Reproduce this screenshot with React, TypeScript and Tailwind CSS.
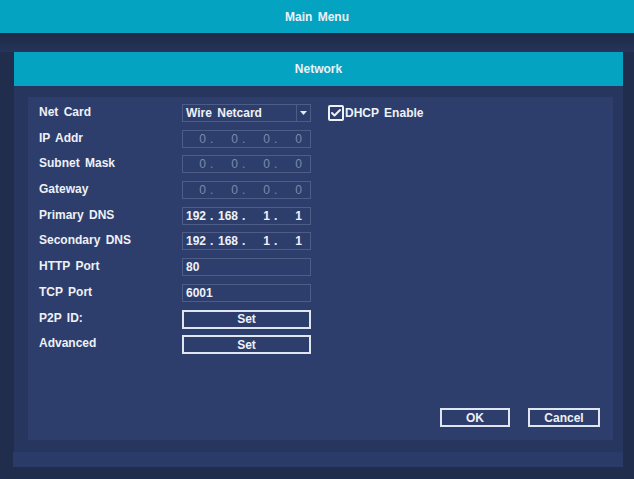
import { Check } from 'lucide-react';

const rows = [
    { label: 'IP Addr', kind: 'ip', value: ['0', '0', '0', '0'], dim: true },
    { label: 'Subnet Mask', kind: 'ip', value: ['0', '0', '0', '0'], dim: true },
    { label: 'Gateway', kind: 'ip', value: ['0', '0', '0', '0'], dim: true },
    { label: 'Primary DNS', kind: 'ip', value: ['192', '168', '1', '1'], dim: false },
    { label: 'Secondary DNS', kind: 'ip', value: ['192', '168', '1', '1'], dim: false },
    { label: 'HTTP Port', kind: 'text', value: ['80'], dim: false },
    { label: 'TCP Port', kind: 'text', value: ['6001'], dim: false },
    { label: 'P2P ID:', kind: 'button', value: ['Set'], dim: false },
    { label: 'Advanced', kind: 'button', value: ['Set'], dim: false },
];

function IpField({ parts, dim }: { parts: string[]; dim: boolean }) {
    return (
        <div className={`flex h-[18px] w-[129px] items-center border border-[#4d5d86] ${dim ? 'font-normal text-[#7f8aa8]' : 'text-[#eef1f7]'}`}>
            {parts.map((p, i) => (
                <div key={i} className="flex">
                    <span className="w-[23px] text-right">{p}</span>
                    {i < 3 && <span className="w-[9px] pl-[4px]">.</span>}
                </div>
            ))}
        </div>
    );
}

export default function App() {
    return (
        <div className="flex h-[479px] w-[634px] flex-col overflow-hidden bg-[#202d4d] font-['Liberation_Sans',Arial,sans-serif] text-[12px] font-bold text-[#eef1f7] [word-spacing:2px]">
            {/* Top bar */}
            <div className="flex h-[33px] shrink-0 items-center justify-center bg-[#03a3c1] pt-[1px]">
                Main Menu
            </div>

            <div className="h-[19px] shrink-0 bg-gradient-to-b from-[#1e2a46] to-[#253459]" />

            {/* Window */}
            <div className="mx-[14px] mr-[11px] flex h-[400px] flex-col bg-[#26365e]">
                <div className="flex h-[34px] shrink-0 items-center justify-center bg-[#03a3c1]">
                    Network
                </div>

                <div className="ml-[14px] mr-[10px] mt-[11px] flex h-[343px] flex-col bg-[#2d3e6d] pl-[11px] pt-[7px]">
                    {/* Net card */}
                    <div className="flex h-[25.7px] items-start">
                        <span className="w-[143px] leading-[16px]">Net Card</span>
                        <div className="flex h-[18px] w-[129px] items-stretch border border-[#4d5d86]">
                            <span className="flex flex-1 items-center pl-[3px]">Wire Netcard</span>
                            <span className="flex w-[14px] items-center justify-center border-l border-[#4d5d86]">
                                <svg width="7" height="4" viewBox="0 0 7 4"><path d="M0 0h7L3.5 4z" fill="#e6eaf2" /></svg>
                            </span>
                        </div>
                        <div className="ml-[17px] flex items-center">
                            <span className="flex h-[16px] w-[16px] items-center justify-center rounded-[2px] border-2 border-[#eef1f7]">
                                <Check size={14} strokeWidth={4} className="text-[#eef1f7]" />
                            </span>
                            <span className="ml-[1px]">DHCP Enable</span>
                        </div>
                    </div>

                    {rows.map(r => (
                        <div key={r.label} className="flex h-[25.7px] items-start">
                            <span className="w-[143px] leading-[16px]">{r.label}</span>
                            {r.kind === 'ip' && <IpField parts={r.value} dim={r.dim} />}
                            {r.kind === 'text' && (
                                <div className="flex h-[18px] w-[129px] items-center border border-[#4d5d86] pl-[3px]">{r.value[0]}</div>
                            )}
                            {r.kind === 'button' && (
                                <div className="flex h-[19px] w-[129px] items-center justify-center border-2 border-[#dfe6f1]">{r.value[0]}</div>
                            )}
                        </div>
                    ))}

                    {/* Footer buttons */}
                    <div className="mt-auto flex justify-end gap-[18px] pb-[13px] pr-[13px]">
                        <div className="flex h-[19px] w-[70px] items-center justify-center border-2 border-[#dfe6f1]">OK</div>
                        <div className="flex h-[19px] w-[72px] items-center justify-center border-2 border-[#dfe6f1]">Cancel</div>
                    </div>
                </div>
            </div>

            <div className="ml-[13px] mr-[11px] h-[15px] shrink-0 bg-[#2b3b69]" />
        </div>
    );
}
